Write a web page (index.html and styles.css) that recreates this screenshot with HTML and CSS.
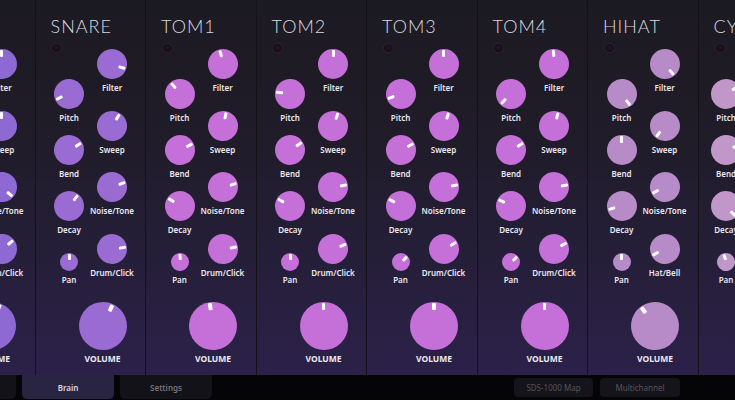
FILE: index.html
```html
<!DOCTYPE html>
<html lang="en">
<head>
    <meta charset="UTF-8">
    <meta name="viewport" content="width=device-width, initial-scale=1.0">
    <title>Drum Brain</title>
    <link rel="stylesheet" href="styles.css">
</head>
<body>
    <div class="rack" id="rack"></div>

    <div class="bottom-bar">
        <div class="tabs">
            <div class="tab">Kit</div>
            <div class="tab active">Brain</div>
            <div class="tab">Settings</div>
        </div>
        <div class="actions">
            <div class="btn">SDS-1000 Map</div>
            <div class="btn wide">Multichannel</div>
        </div>
    </div>

    <script>
        // right column: Filter, Sweep, Noise/Tone, Drum/Click
        // left column: Pitch, Bend, Decay, Pan  -- then volume
        const strips = [
            { name: 'KICK',  color: '#8e68d3', right: [0, 0, 130, 50],    left: [240, 60, 40, 0],    vol: 20 },
            { name: 'SNARE', color: '#9a6bd2', right: [107, 30, 68, 80],  left: [245, 58, 37, 0],    vol: 24 },
            { name: 'TOM1',  color: '#c470d8', right: [345, 11, 73, 79],  left: [319, 61, 301, 355], vol: 352 },
            { name: 'TOM2',  color: '#c470d8', right: [0, 19, 79, 67],    left: [275, 55, 298, 0],   vol: 0 },
            { name: 'TOM3',  color: '#c470d8', right: [0, 17, 79, 59],    left: [248, 60, 297, 45],  vol: 0 },
            { name: 'TOM4',  color: '#c470d8', right: [355, 15, 79, 62],  left: [223, 58, 295, 45],  vol: 0 },
            { name: 'HIHAT', color: '#b68bc7', right: [139, 217, 241, 241], left: [142, 0, 253, 0],  vol: 324, last: 'Hat/Bell' },
            { name: 'CYMBAL', color: '#c196c9', right: [20, 30, 100, 60], left: [55, 67, 135, 340], vol: 0, cls: 'cy' }
        ];

        function control(label, angle, size) {
            return `<div class="ctl">
                <div class="knob ${size || ''}" style="--a:${angle}deg"></div>
                <span class="label">${label}</span>
            </div>`;
        }

        const rack = document.getElementById('rack');
        rack.innerHTML = strips.map(s => {
            const rightNames = ['Filter', 'Sweep', 'Noise/Tone', s.last || 'Drum/Click'];
            const leftNames = ['Pitch', 'Bend', 'Decay'];
            return `<section class="strip ${s.cls || ''}" style="--knob:${s.color}">
                <h2 class="title">${s.name}</h2>
                <div class="knobs">
                    <div class="col left">
                        <div class="led"></div>
                        ${leftNames.map((n, i) => control(n, s.left[i])).join('')}
                        ${control('Pan', s.left[3], 'small')}
                    </div>
                    <div class="col right">
                        ${rightNames.map((n, i) => control(n, s.right[i])).join('')}
                    </div>
                </div>
                <div class="ctl vol">
                    <div class="knob big" style="--a:${s.vol}deg"></div>
                    <span class="label">VOLUME</span>
                </div>
            </section>`;
        }).join('');
    </script>
</body>
</html>
```

FILE: styles.css
```css
body {
    margin: 0;
    width: 735px;
    height: 400px;
    overflow: hidden;
    background-color: #050507;
    font-family: "Noto Sans", sans-serif;
}
.rack {
    display: flex;
    height: 375px;
    margin-left: -75px;
}
.strip {
    flex: 0 0 110.5px;
    box-sizing: border-box;
    padding: 15px 0 0 15px;
    border-right: 1px solid #141117;
    background: linear-gradient(#1c1a21 0%, #201c2a 40%, #2b2149 100%);
}
.title {
    margin: 0;
    font-family: Lato, "Open Sans", sans-serif;
    font-weight: 300;
    font-size: 18px;
    line-height: 22px;
    letter-spacing: 1px;
    color: #dcd8e2;
    white-space: nowrap;
}
.knobs {
    display: flex;
    height: 259px;
    margin: 6px 0 0 -3px;
}
.col {
    display: flex;
    flex-direction: column;
    width: 43px;
}
.right {
    padding-top: 6px;
}
.led {
    width: 11px;
    height: 11px;
    margin: 0 0 26px 3.5px;
    border-radius: 50%;
    box-sizing: border-box;
    background: radial-gradient(circle at 50% 45%, #2a1426 0%, #150c16 70%);
    border: 1px solid #2c2230;
}
.ctl {
    display: flex;
    flex-direction: column;
    align-items: center;
    height: 61.5px;
}
.knob {
    position: relative;
    flex: 0 0 auto;
    width: 30px;
    height: 30px;
    border-radius: 50%;
    background-color: var(--knob);
    transform: rotate(var(--a));
}
.knob::after {
    content: "";
    position: absolute;
    top: 1px;
    left: 50%;
    width: 3px;
    height: 7px;
    margin-left: -1.5px;
    border-radius: 1px;
    background: #fff;
}
.knob.small {
    width: 18px;
    height: 18px;
    margin-top: 6.5px;
}
.knob.small::after {
    height: 6px;
}
.knob.big {
    width: 48px;
    height: 48px;
}
.knob.big::after {
    width: 3.5px;
    margin-left: -1.75px;
}
.label {
    margin-top: 4px;
    font-size: 8px;
    font-weight: 600;
    line-height: 10px;
    color: #ece8f0;
    white-space: nowrap;
}
.vol {
    width: 48px;
    height: auto;
    margin-left: 28px;
}
.vol .label {
    font-size: 8.5px;
    font-weight: 700;
}
.cy .knobs {
    margin-left: -9px;
}
.cy .led {
    margin-left: 10px;
}
.bottom-bar {
    display: flex;
    align-items: flex-start;
    height: 25px;
}
.tabs {
    display: flex;
    gap: 6px;
    margin-left: -76px;
}
.tab {
    display: flex;
    align-items: center;
    justify-content: center;
    width: 92px;
    height: 24px;
    border-radius: 0 0 5px 5px;
    background-color: #131218;
    color: #76717e;
    font-size: 8px;
    font-weight: 600;
}
.tab.active {
    background-color: #2a2443;
    color: #dcd8e4;
}
.actions {
    display: flex;
    gap: 7px;
    margin: 3px 55px 0 auto;
}
.btn {
    display: flex;
    align-items: center;
    justify-content: center;
    width: 79px;
    height: 19px;
    border-radius: 4px;
    background-color: #15141a;
    color: #57535f;
    font-size: 8px;
}
.btn.wide {
    width: 80px;
}
```
